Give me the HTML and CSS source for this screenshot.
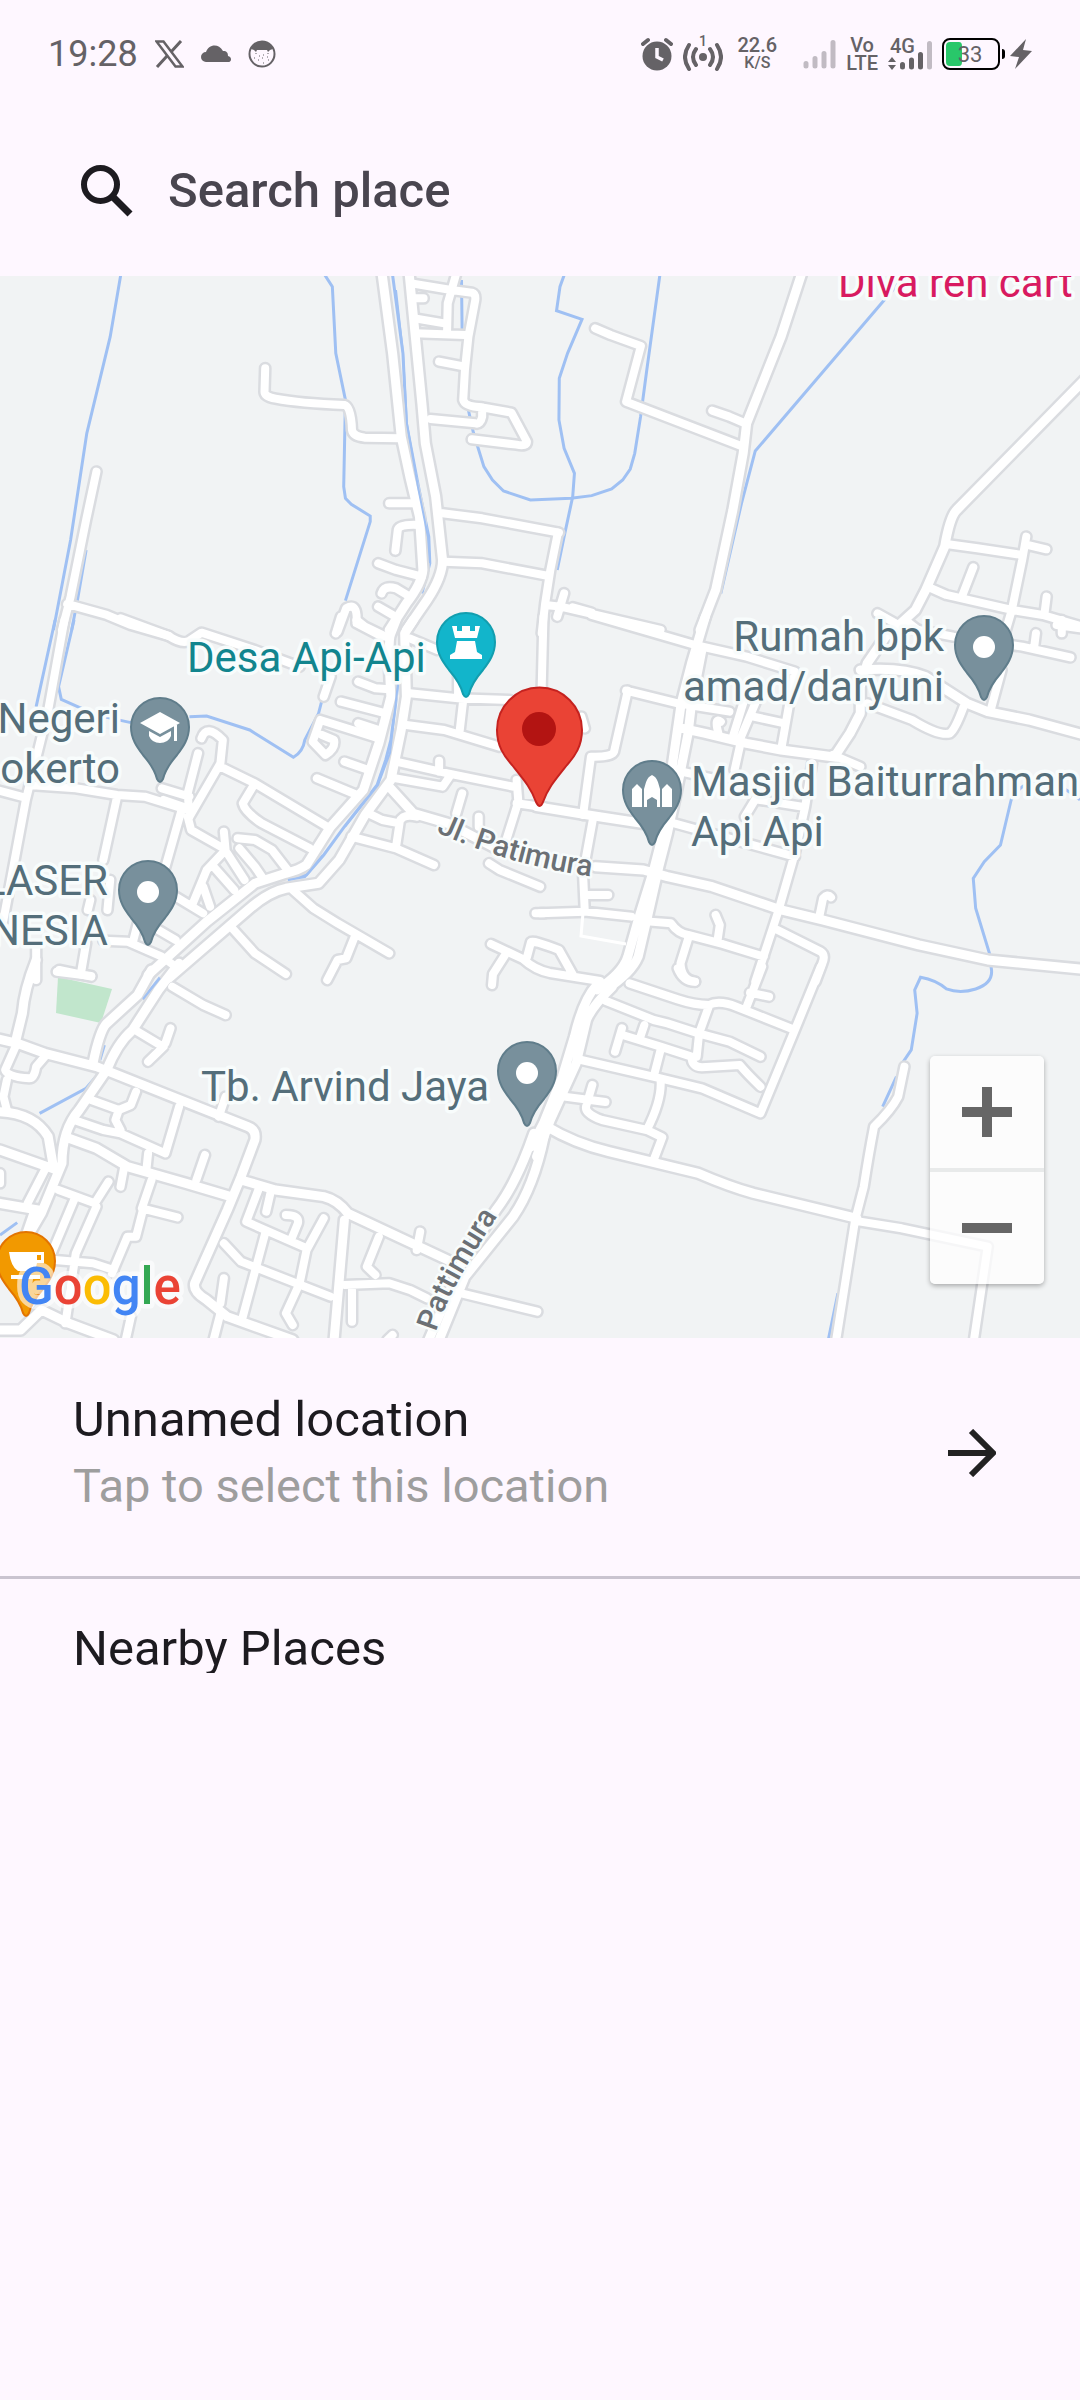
FILE: index.html
```html
<!DOCTYPE html>
<html lang="en">
<head>
<meta charset="utf-8">
<meta name="viewport" content="width=device-width, initial-scale=1">
<title>Search place</title>
<link rel="stylesheet" href="styles.css">
</head>
<body>
<div class="screen">
  <div class="status">
    <div class="status-left">
      <span class="clock">19:28</span>
      <svg width="29" height="28" viewBox="0 0 29 28"><path d="M1.5 1.5H8.500L27.500 26.500H20.500Z" fill="none" stroke="currentColor" stroke-width="2.500"/><path d="M26 1L16 12M12 16L2 27" stroke="currentColor" stroke-width="3"/></svg>
      <svg class="cloud" width="30" height="28" viewBox="0 0 30 28"><path d="M5 22a5 5 0 0 1 0-10C7 5 17 2 22 11c4 0 5 2 5 5 4 1 4 6 0 6Z" fill="currentColor"/></svg>
      <svg width="28" height="28" viewBox="0 0 28 28"><circle cx="14" cy="14" r="12.500" fill="none" stroke="currentColor" stroke-width="2"/><path d="M3 9C7-1 21-1 25 9L22 10 20 12 19 10H9L8 12 6 10Z" fill="currentColor"/><path d="M8 13v1M20 13v1M6 18h1M11 16h1M15 15h1M14 18h1M10 20h1M19 17h1M15 23h1M20 20h1" stroke="currentColor"/></svg>
    </div>
    <div class="status-right">
      <svg width="32" height="36" viewBox="0 0 32 36"><circle cx="16" cy="20" r="14.500" fill="currentColor"/><path d="M2 8L7 4M30 8L25 4" stroke="currentColor" stroke-width="4" stroke-linecap="round"/><path d="M16 12V21L22 24" fill="none" stroke="#fef7ff" stroke-width="3.500"/></svg>
      <svg width="40" height="40" viewBox="0 0 40 40"><g fill="none" stroke="currentColor" stroke-width="4" stroke-linecap="round"><path d="M6 11Q-2 23 6 35M34 11Q42 23 34 35M13 15Q7 23 13 31M27 15Q33 23 27 31"/></g><circle cx="20" cy="23" r="4" fill="currentColor"/><text class="hot-num" x="20" y="12">1</text></svg>
      <span class="stack speed"><span class="s20">22.6</span><span class="s16">K/S</span></span>
      <svg width="33" height="32" viewBox="0 0 33 32"><g stroke="#c1bbc3" stroke-width="5" stroke-linecap="round"><path d="M3 25.500V28M12 20.500V28M21 15.500V28M30 4.500V28"/></g></svg>
      <span class="stack"><span class="s20">Vo</span><span class="s20">LTE</span></span>
      <svg width="44" height="36" viewBox="0 0 44 36"><text class="net" x="2" y="17">4G</text><path d="M4 21L8 26H0ZM4 34L0 29H8Z" fill="currentColor"/><g stroke="currentColor" stroke-width="5" stroke-linecap="round"><path d="M14.500 28.500V31M23.500 24V31M32.500 18.500V31"/></g><path d="M41.500 7.500V31" stroke="#c1bbc3" stroke-width="5" stroke-linecap="round"/></svg>
      <span class="power">
        <svg width="64" height="32" viewBox="0 0 64 32"><rect x="1" y="1" width="56" height="30" rx="7" fill="none" stroke="#000" stroke-width="2"/><path d="M8 4H17Q20 4 20 8V24Q20 28 17 28H8Q4 28 4 24V8Q4 4 8 4Z" fill="#29c76a"/><path d="M60 11Q63 11 63 14V18Q63 21 60 21Z" fill="#000"/><text class="charge" x="28" y="24">33</text></svg>
        <svg width="22" height="32" viewBox="0 0 22 32"><path d="M16 1L0 18 9 19 5 31 22 13 13 12Z" fill="currentColor"/></svg>
      </span>
    </div>
  </div>

  <form class="search">
    <svg width="54" height="54" viewBox="0 0 54 54"><circle cx="20.500" cy="20.500" r="16.500" fill="none" stroke="#1d1b20" stroke-width="6"/><path d="M32 32L50 50" stroke="#1d1b20" stroke-width="7"/></svg>
    <input type="search" placeholder="Search place" aria-label="Search place">
  </form>

  <section class="map" aria-label="Map">
    <svg class="map-canvas" viewBox="0 276 1080 1062">
      <defs>
        <path id="pin" d="M-29 0A29 29 0 0 1 29 0C29 12 23 20 17 28C10 36 5 44 3 52Q0 58-3 52C-5 44-10 36-17 28C-23 20-29 12-29 0Z"/>
        <g id="roads">
          <g transform="translate(0 270) scale(.3444 .3333)">
            <path d="M280 605L250 750 205 980 180 1080M195 1002L310 1035 380 1065 490 1098M770 295L768 365Q768 380 800 386Q870 400 1000 405Q1020 410 1022 480Q1025 500 1060 503L1160 505M1195 40L1310 60 1370 68Q1382 72 1380 90L1360 200 1350 300 1345 390Q1350 410 1400 412L1485 428 1530 515Q1530 530 1500 524L1370 508M1325 10L1300 100 1298 190M1205 85H1230M1205 145L1290 160M1205 190L1350 195M1275 275L1350 290M1400 412V440Q1395 465 1380 460L1250 447M1130 700H1210M1148 842L1155 780Q1158 762 1215 765M1098 880L1150 900 1225 920M1108 970Q1115 945 1150 955L1190 980M1098 1010L1140 1035M980 1085L1005 1015Q1040 995 1035 1060L1110 1100M1285 730L1400 745 1623 788M1290 875L1400 880 1593 918"/>
            <path class="wide" d="M1108 0L1140 250 1165 500 1190 620 1218 740 1228 900Q1225 940 1180 1000L1130 1080M1187 0L1225 400 1235 520 1265 680 1285 870Q1285 920 1240 990L1180 1080"/>
          </g>
          <g transform="translate(540 270) scale(.3444 .3333)">
            <path d="M52 788L30 900 15 1000 5 1090M15 1005L60 1010 350 1080M70 970L50 1040M95 1012L150 1028M160 175L205 195 293 228 250 395 590 530M500 422L550 440 600 462M1180 822L1270 835 1400 855M1412 800L1400 870 1370 1020 1350 1090M1415 825L1470 838M1258 892L1225 980M1125 950L1180 975 1370 1020 1460 1035 1568 1068M1471 980L1465 1030M1060 1050L1110 1090"/>
            <path class="wide" d="M763 0L700 200 600 460 590 550 560 720 510 960 465 1080M1590 320L1400 520 1210 720Q1190 740 1175 830L1120 960 1090 1020 1010 1095"/>
          </g>
          <g transform="translate(0 620) scale(.3444 .3333)">
            <path d="M187 0L140 270 75 540 10 900M-10 510L70 532M85 495L220 505 340 525 420 530 545 570M340 530L300 720M530 560L475 760M575 400L545 520 550 590M550 590L640 430 647 360Q600 310 585 355M640 440L740 490 950 620M740 490L705 550Q710 575 760 610L900 685M545 590L555 630 640 680M650 635L655 690 600 750 560 850M690 655L740 660 790 690 835 750M695 685L740 740 760 770M660 700L710 780M620 740L680 810M590 800L610 860M470 505L550 530M475 540L530 560M510 830L590 880M255 870L262 840M312 870L320 780M300 962L370 965 470 1010 510 1040M385 970L400 910M460 930L510 960M105 980V1080M250 970L235 1060M172 1050L265 1070M850 810L910 865 980 910 1130 1000M1030 950L1005 1015 980 1020 950 1080M670 920L740 1000 830 1062M1040 185L1090 205 1130 208M990 245L1120 280M930 300L1100 355M930 300L908 365 945 405Q975 385 970 360L935 345M1040 310L1100 330M1000 425L1070 450M920 475L1030 522M1190 220L1330 235 1480 240M1345 240L1335 330M1180 315L1290 330 1450 380M1150 425L1300 460 1500 502M1150 475L1285 500 1305 470M1275 422V455M1500 480L1505 545 1470 660M1342 520L1325 580M1390 590V620M1070 580L1110 600 1160 610 1150 680M1160 605Q1170 580 1210 590M1020 650L1150 685 1260 735M1420 730L1450 750 1568 800M1555 880H1580M1500 550L1580 562M350 -5L490 48Q530 75 550 62L585 38 740 90 870 140M1035 0L1060 20 1120 50M1190 55L1270 90M975 40L990 -10M960 170L940 230M1330 130V230"/>
            <path class="wide" d="M1150 0L1135 40Q1125 60 1135 230L1100 370 1055 510 960 620 890 735Q870 750 830 760L740 790 600 905 430 1065M1200 0L1175 40 1180 230 1165 330 1135 480 1060 585 985 720 925 790 830 805Q780 815 720 870L490 1075M1130 500L1200 580 1300 610 1450 690"/>
          </g>
          <g transform="translate(540 620) scale(.3444 .3333)">
            <path d="M10 -10L5 200M150 -15L300 30 450 75 600 110 740 155 700 390M1515 0V40M1568 25L1500 15M1440 40L1435 80M980 -20L1050 20 1200 50 1400 80 1540 112M1340 150L1310 265M950 250L1080 300Q1160 350 1190 340Q1205 330 1230 260M250 212L400 250 550 275M255 212L215 395Q210 412 148 410L125 585M590 250L560 350M518 340Q505 290 525 305M625 250L580 360M620 290L710 310M582 370L565 450M390 450L500 475M790 430L770 560 740 700 690 880 625 1085M630 530L595 590M640 540L760 560M390 610L600 670 740 710M850 405L930 440M155 590L125 760 130 875M140 825H198M0 880L130 875 265 890M810 895L822 835Q835 820 845 832M320 905L380 910Q400 940 430 945L530 972 650 1010M515 965L522 915 510 885M432 950L408 1030Q410 1080 450 1085M690 930L815 995Q830 1005 820 1030L800 1085M70 300L120 290 130 325"/>
            <path class="wide" d="M480 -10L440 130 410 250 385 430 370 600M470 90L440 250 430 340 395 520 370 640 345 740M370 590L330 750 285 900 255 1010Q240 1060 165 1110M345 740L310 900 285 1010Q265 1060 190 1110M-10 560L140 585 310 612M400 322L480 340 600 370 700 390 860 412M1010 40L950 130 930 200 930 280 900 340 855 410M930 150Q1050 140 1120 170L1240 250 1300 275 1420 300 1580 345M160 740L300 750 370 770 500 800 700 870 820 900 1100 975 1300 1020 1580 1048"/>
          </g>
          <path d="M491 944L523 959Q535 970 550 973L600 981M507 952L493 974 492 985M527 957L531 942Q533 940 559 950L573 975"/>
          <g transform="translate(0 970) scale(.3444 .3333)">
            <path d="M45 230L15 300Q20 320 85 325 100 325 105 290L130 260M20 330L10 380 20 420M265 390L345 420 335 450 350 480M395 365L380 405 345 420M215 450L300 480 350 490 480 550 520 410M430 550L425 600M595 555L570 630M360 595L350 650M440 630L412 715 515 742M415 720L395 800 370 800 325 910M170 660L275 700 315 635M280 710L220 850 190 1060M215 690L150 850M160 870L270 880 330 900M380 1040L365 1110M750 660L715 755 880 830M785 670L773 725M830 735Q870 735 865 760L845 810M940 745L890 840 870 940 830 1030 850 1065M770 790L705 1040M650 820L700 875 860 940 960 980M650 925L640 1000M1100 800L1065 890 1090 915M1220 785L1210 840M1000 945L1130 940 1190 960 1240 985M1022 960V1055M640 1030L620 1110M500 50L590 105 655 135M400 185L465 225 480 220 495 175M475 230L430 275M655 380L635 440M165 5L265 18M1560 1025L1340 970M0 640V610M100 720L60 840M130 600L80 700M1125 1110L1140 1095"/>
            <path class="wide" d="M440 0L400 75 310 160Q290 180 270 280M520 -20L460 60 385 180Q340 220 310 300L230 420Q180 480 180 580L120 730 80 800M0 208L50 220 130 250 280 290 330 310 500 380 720 470Q745 480 740 510L700 620 660 720 565 940Q560 965 600 990L660 1040 850 1110M0 425Q100 430 140 500L155 590M0 540L165 600M0 700L110 720M105 -30Q70 60 65 130L45 215M200 505L280 535 370 590 540 640 670 680M700 630L800 660 940 680Q980 690 1010 730L1300 870M1000 750L970 1110M0 1080H60L120 1020 200 1060 330 1110M1550 490Q1500 640 1440 720L1340 880 1245 1110M1580 500Q1550 650 1490 740L1350 920 1275 1110"/>
          </g>
          <g transform="translate(540 970) scale(.3444 .3333)">
            <path d="M645 -10L600 110M610 68L665 80M815 -10L740 180 640 430 470 355 350 325 120 270M260 40L400 88Q450 105 490 105 520 90 570 110L740 180M190 92L330 150 370 160 460 190 550 215 640 260M490 110L462 190 455 260M240 195L350 230 440 260Q440 290 470 292L580 285Q600 310 640 350M238 175L218 245M303 165L290 205M350 240L330 320M350 330Q355 390 310 480L180 450Q125 430 135 405L152 345M70 380L190 396M310 480L355 502 330 570M400 -5Q415 35 450 35M1058 290L1040 380Q1020 420 970 470 955 550 940 650L915 750 860 1110M930 755L1050 775 1300 830 1260 1110"/>
            <path class="wide" d="M165 45Q125 90 100 200L65 320 10 460-25 530M210 50Q150 110 135 150L105 280 30 450-10 560M20 470Q100 520 200 545L460 610Q550 650 620 670L920 745"/>
          </g>
        </g>
      </defs>
      <rect y="276" width="1080" height="1062" fill="#f1f3f4"/>
      <path d="M58 977L112 989 101 1023 56 1013Z" fill="#c1e6cc"/>
      <g class="water">
        <path transform="translate(0 270) scale(.3444 .3333)" d="M353 0L320 200 252 490 205 810 155 1080M250 840L225 990 208 1080M940 10L965 50 975 250 1003 390 998 650 1003 685 1020 703 1075 738V755L1003 992M1138 0L1170 250 1180 460 1215 650 1245 800 1248 880 1225 970M1340 30L1342 200M1360 420L1375 490 1405 590 1430 630 1462 663 1540 690 1658 685 1718 677 1776 657 1808 630 1830 597 1843 550 1860 440 1878 300 1918 0"/>
        <path transform="translate(540 270) scale(.3444 .3333)" d="M72 10L58 50 48 122 122 148 80 250 56 325 55 450 70 535 100 610 95 680 70 800 50 900M1045 35L625 543 585 700 525 970"/>
        <path transform="translate(0 620) scale(.3444 .3333)" d="M160 0L105 260M215 0L170 200 178 238 230 262 300 290 380 308M550 290L600 288 725 330 852 412Q880 395 885 360L925 280 950 180M1155 190L1150 240 1135 360 1120 420 1095 495 1000 620 940 705 890 765 835 778"/>
        <path transform="translate(540 620) scale(.3444 .3333)" d="M1568 540Q1500 480 1440 482 1395 490 1368 540L1337 675 1290 725 1258 775 1265 865 1305 1000 1311 1050Q1315 1090 1265 1107 1220 1122 1180 1107 1150 1080 1105 1072L1088 1110 1095 1180 1078 1290 1055 1325M1035 1370L995 1460M865 2020L838 2155"/>
        <path transform="translate(0 970) scale(.3444 .3333)" d="M465 22L415 88M303 225L290 270M283 315L250 355 115 430M0 795L50 758M90 1030L110 1000M1515 610L1440 745"/>
      </g>
      <use href="#roads" class="casing"/>
      <use href="#roads" class="surface"/>
      <path class="river" d="M396 290L403 353 407 424 418 487 428 537 430 563M398 683L390 753 378 785 345 827M323 855L305 877 288 880M160 978L143 999"/>
      <path d="M583 913L581 936 626 944" fill="none" stroke="#fff" stroke-width="3"/>

      <g class="pins">
        <g transform="translate(160 727)"><use href="#pin" class="place"/><path d="M-20-4L0-15 20-4 0 7ZM14-2H17V14H14ZM-11 4L0 10 11 4V9Q8 16 0 16T-11 9Z" fill="#fff"/></g>
        <g transform="translate(148 890)"><use href="#pin" class="place"/><circle cy="2" r="11" fill="#fff"/></g>
        <g transform="translate(466 642)"><use href="#pin" class="town"/><path d="M-14-16H-9V-11H-4V-16H4V-11H9V-16H14L11-4H-11ZM-9-1H9L11 10 16 13V17H-16V13L-11 10Z" fill="#fff"/></g>
        <g transform="translate(652 790)"><use href="#pin" class="place"/><path d="M-20 17V-1L-15-6-10-1V17ZM10 17V-1L15-6 20-1V17ZM-8 17V-1C-6-7-6-12 0-15 6-12 6-7 8-1V17H5V10L0 7-5 10V17Z" fill="#fff"/></g>
        <g transform="translate(984 645)"><use href="#pin" class="place"/><circle cy="2" r="11" fill="#fff"/></g>
        <g transform="translate(527 1071)"><use href="#pin" class="place"/><circle cy="2" r="11" fill="#fff"/></g>
        <g transform="translate(26 1261)"><use href="#pin" class="cafe"/><path d="M-17-9H18V2H11Q10 10 4 10H-8Q-15 6-17-9ZM11-6V-1H15V-6ZM-15 14H14V18H-15Z" fill="#fff" fill-rule="evenodd"/></g>
        <path d="M497 730A42.500 42.500 0 0 1 582 730C582 746 575 756 567 765 555 780 548 788 543 802Q540 810 536 802C531 788 524 780 512 765 504 756 497 746 497 730Z" fill="#ea4335" stroke="#c5221f" stroke-width="2"/>
        <circle cx="539" cy="729" r="17" fill="#b31412"/>
      </g>

      <g class="labels">
        <text x="187" y="672" class="l-town">Desa Api-Api</text>
        <text x="120" y="733" text-anchor="end">Negeri</text>
        <text x="120" y="783" text-anchor="end">okerto</text>
        <text x="108" y="895" text-anchor="end">LASER</text>
        <text x="108" y="945" text-anchor="end">NESIA</text>
        <text x="944" y="651" text-anchor="end">Rumah bpk</text>
        <text x="944" y="701" text-anchor="end">amad/daryuni</text>
        <text x="691" y="796">Masjid Baiturrahman</text>
        <text x="691" y="846">Api Api</text>
        <text x="201" y="1101">Tb. Arvind Jaya</text>
        <text x="838" y="297" class="l-shop">Diva ren cart</text>
        <path id="street-a" d="M436 832Q515 868 610 879" fill="none"/>
        <path id="street-b" d="M436 1332Q448 1290 503 1208" fill="none"/>
        <text class="street"><textPath href="#street-a">Jl. Patimura</textPath></text>
        <text class="street"><textPath href="#street-b">Pattimura</textPath></text>
      </g>
      <text class="brand" x="19" y="1304"><tspan fill="#4285f4">G</tspan><tspan fill="#ea4335">o</tspan><tspan fill="#fbbc04">o</tspan><tspan fill="#4285f4">g</tspan><tspan fill="#34a853">l</tspan><tspan fill="#ea4335">e</tspan></text>
    </svg>
    <div class="zoom">
      <button type="button" aria-label="Zoom in"><svg width="50" height="50" viewBox="0 0 50 50"><path d="M0 20H20V0H30V20H50V30H30V50H20V30H0Z" fill="#666"/></svg></button>
      <button type="button" aria-label="Zoom out"><svg width="50" height="50" viewBox="0 0 50 50"><path d="M0 20H50V30H0Z" fill="#666"/></svg></button>
    </div>
  </section>

  <button type="button" class="pick">
    <span class="pick-text"><span class="title">Unnamed location</span><span class="hint">Tap to select this location</span></span>
    <svg width="48" height="48" viewBox="0 0 48 48"><path d="M0 24H44M23 2L45 24 23 46" fill="none" stroke="#222" stroke-width="6"/></svg>
  </button>
  <h2 class="nearby">Nearby Places</h2>
</div>
</body>
</html>
```
FILE: styles.css
```css
* { box-sizing: border-box; }

body {
  margin: 0;
  background: #fef7ff;
  font-family: Roboto, "Noto Sans", sans-serif;
  color: #1d1b20;
}

svg { display: block; flex: none; }

.screen {
  display: flex;
  flex-direction: column;
  min-height: 100vh;
}

/* status bar */
.status {
  display: flex;
  justify-content: space-between;
  align-items: center;
  height: 108px;
  padding: 0 48px;
  color: #656266;
}
.status-left { display: flex; align-items: center; gap: 17px; }
.status-right { display: flex; align-items: center; gap: 10px; }
.power { display: flex; align-items: center; gap: 4px; }
.clock { font-size: 36px; line-height: 40px; }
.stack {
  display: flex;
  flex-direction: column;
  align-items: center;
  font-weight: 500;
}
.speed { margin: 0 16px 0 4px; }
.s20 { font-size: 20px; line-height: 18px; }
.s16 { font-size: 16px; line-height: 18px; }
.hot-num { font-size: 14px; font-weight: 500; text-anchor: middle; fill: currentColor; }
.net { font-size: 20px; font-weight: 500; fill: currentColor; }
.charge { font-size: 22px; fill: currentColor; text-anchor: middle; }

/* search */
.search {
  display: flex;
  align-items: center;
  gap: 34px;
  height: 168px;
  padding: 0 80px 2px;
}
.search input {
  flex: 1;
  min-width: 0;
  padding: 0;
  border: 0;
  outline: 0;
  background: transparent;
  font: 500 49px/56px Roboto, "Noto Sans", sans-serif;
  color: #1d1b20;
}
.search input::placeholder { color: #49454f; opacity: 1; }

/* map */
.map { position: relative; }
.map-canvas { width: 100%; height: auto; }
.map-canvas path { vector-effect: non-scaling-stroke; }
.water, .river { fill: none; stroke: #9fc0f3; stroke-width: 3; }
.casing, .surface { fill: none; stroke-linecap: round; stroke-linejoin: round; }
.casing { stroke: #dadce0; stroke-width: 13; --wide: 14; }
.surface { stroke: #fff; stroke-width: 8; --wide: 9; }
.wide { stroke-width: var(--wide); }
.river { stroke-width: 2; }
.place { fill: #78909c; stroke: #607d8b; stroke-width: 2; }
.town { fill: #12b5cb; stroke: #129eaf; stroke-width: 2; }
.cafe { fill: #f29900; stroke: #e37400; stroke-width: 2; }
.labels {
  font-size: 42px;
  fill: #546e7a;
  stroke: #f8fcfc;
  stroke-width: 7;
  stroke-linejoin: round;
  paint-order: stroke;
}
.labels path { stroke: none; }
.l-town { fill: #12858e; }
.l-shop { fill: #d81b60; }
.street { font-size: 30px; font-weight: 500; fill: #6b7075; stroke-width: 5; }
.brand {
  font-size: 51px;
  font-weight: 500;
  stroke: rgba(255, 255, 255, .6);
  stroke-width: 9;
  stroke-linejoin: round;
  paint-order: stroke;
}
.zoom {
  position: absolute;
  right: 36px;
  bottom: 54px;
  display: flex;
  flex-direction: column;
  width: 114px;
  border-radius: 5px;
  overflow: hidden;
  box-shadow: 0 2px 5px rgba(0, 0, 0, .3);
}
.zoom button {
  display: grid;
  place-items: center;
  height: 112px;
  padding: 0;
  border: 0;
  background: rgba(255, 255, 255, .75);
}
.zoom button + button { height: 116px; border-top: 4px solid #e8eaea; }

/* location rows */
.pick {
  display: flex;
  justify-content: space-between;
  align-items: center;
  padding: 50px 84px 58px 73px;
  border: 0;
  border-bottom: 3px solid #cac4d0;
  background: none;
  font-family: inherit;
  text-align: left;
}
.pick-text { display: flex; flex-direction: column; gap: 2px; }
.title { font-size: 49px; line-height: 64px; color: #1d1b20; }
.hint { font-size: 47px; line-height: 64px; color: #9e9e9e; }
.nearby {
  margin: 38px 73px 0;
  height: 56px;
  overflow: hidden;
  font-size: 49px;
  font-weight: 400;
  line-height: 64px;
}
```
